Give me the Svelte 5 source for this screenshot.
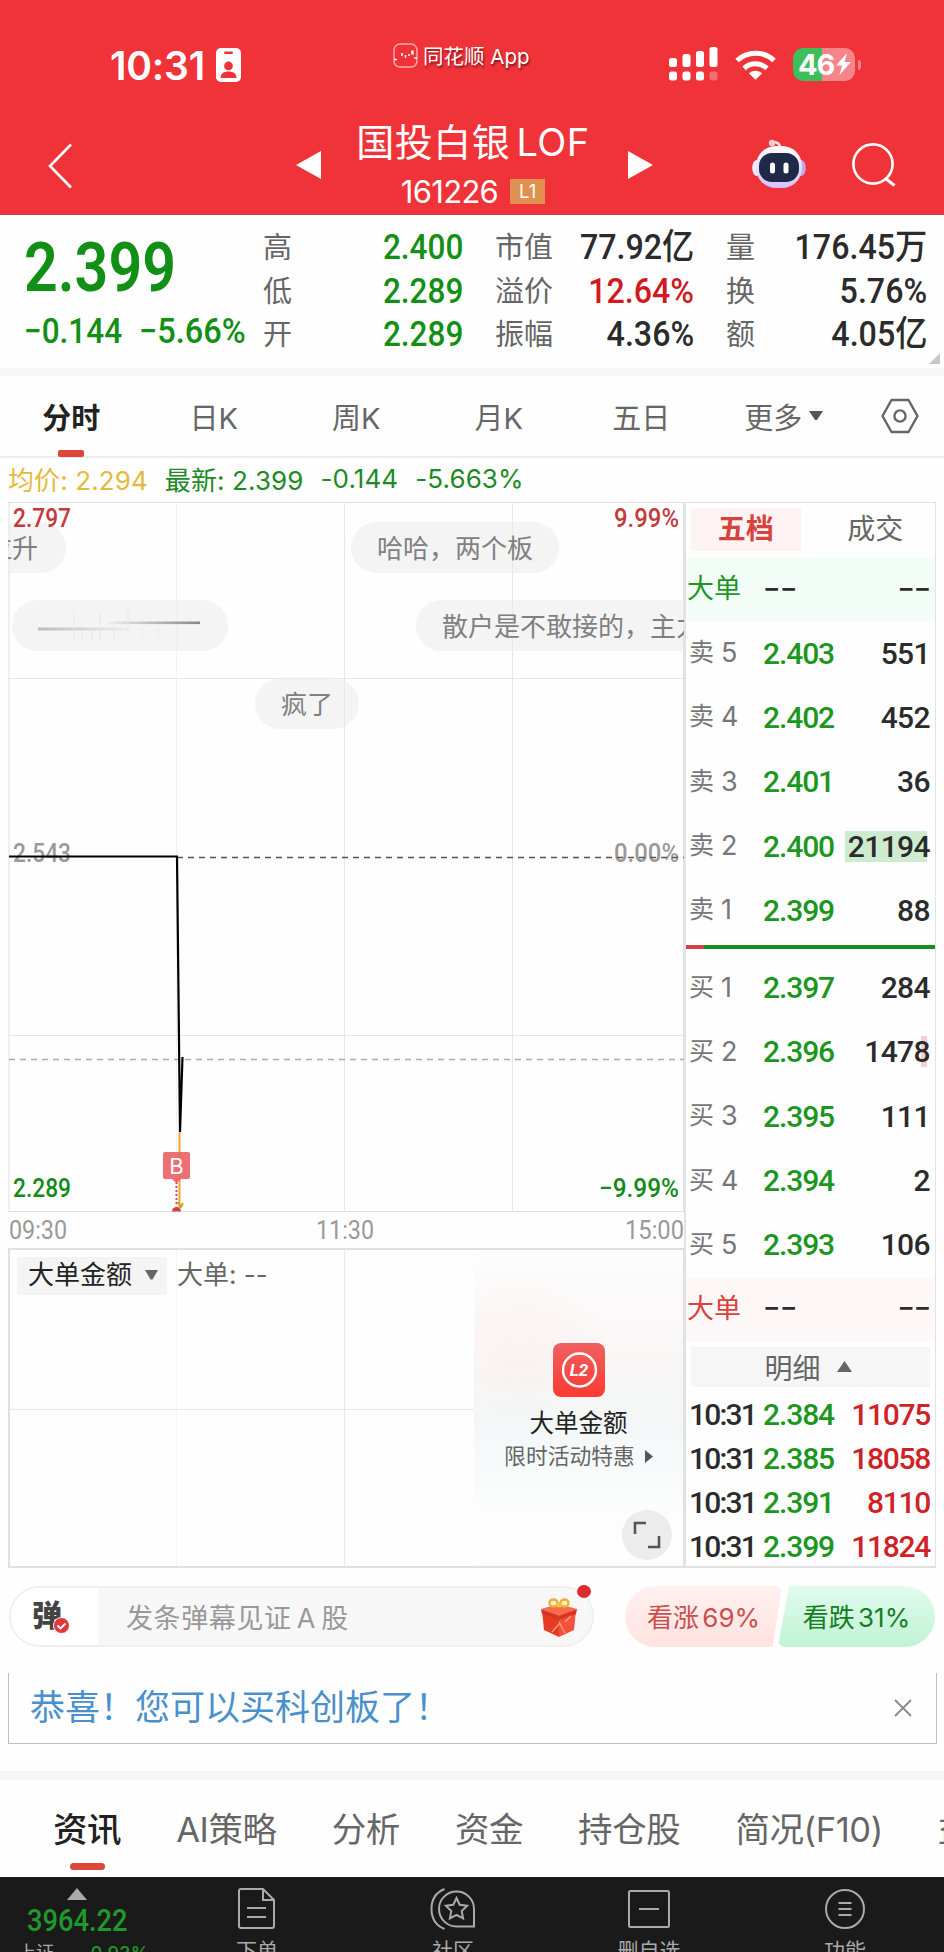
<script>
  const stats = [
    [['高', '2.400', 'down'], ['低', '2.289', 'down'], ['开', '2.289', 'down']],
    [['市值', '77.92亿', ''], ['溢价', '12.64%', 'up'], ['振幅', '4.36%', '']],
    [['量', '176.45万', ''], ['换', '5.76%', ''], ['额', '4.05亿', '']]
  ];

  const periods = ['分时', '日K', '周K', '月K', '五日', '更多'];
  let period = $state('分时');

  const sells = [
    { n: 5, price: '2.403', vol: '551' },
    { n: 4, price: '2.402', vol: '452' },
    { n: 3, price: '2.401', vol: '36' },
    { n: 2, price: '2.400', vol: '21194', mark: 'green', bar: 82 },
    { n: 1, price: '2.399', vol: '88' }
  ];
  const buys = [
    { n: 1, price: '2.397', vol: '284' },
    { n: 2, price: '2.396', vol: '1478', mark: 'pink', bar: 6 },
    { n: 3, price: '2.395', vol: '111' },
    { n: 4, price: '2.394', vol: '2' },
    { n: 5, price: '2.393', vol: '106' }
  ];
  const ticks = [
    ['10:31', '2.384', '11075'],
    ['10:31', '2.385', '18058'],
    ['10:31', '2.391', '8110'],
    ['10:31', '2.399', '11824']
  ];

  const sections = ['资讯', 'AI策略', '分析', '资金', '持仓股', '简况(F10)', '益'];
  let section = $state('资讯');

  let bannerOpen = $state(true);
</script>

{#snippet level(side, row)}
  <div class="level">
    <span class="side">{side}<i>{row.n}</i></span>
    <span class="price">{row.price}</span>
    <span class="vol">
      {#if row.mark}<span class="mark {row.mark}" style="width: {row.bar}px"></span>{/if}
      <b>{row.vol}</b>
    </span>
  </div>
{/snippet}

<div class="phone">
  <header>
    <div class="status">
      <div class="clock">
        <span>10:31</span>
        <svg width="25" height="34" viewBox="0 0 25 34">
          <rect width="25" height="34" rx="5" fill="#fff" />
          <rect x="8" y="3.5" width="9" height="2.4" rx="1.2" fill="#ef3239" />
          <circle cx="12.5" cy="18" r="4.4" fill="#ef3239" />
          <path d="M4.5 30c0-4.500 3.500-6.500 8-6.500s8 2 8 6.500z" fill="#ef3239" />
        </svg>
      </div>
      <div class="app-name">
        <svg width="25" height="25" viewBox="0 0 25 25" fill="none" stroke="#fff">
          <rect x="1" y="1" width="23" height="23" rx="6" stroke-opacity=".6" stroke-width="1.400" />
          <path d="M1 16.500h3M21 15h3M9 10v3M12.500 12v3M16 11v2" stroke-width="1.500" />
          <path d="M19.500 7.500v4" stroke-width="2.500" />
        </svg>
        <span>同花顺 App</span>
      </div>
      <div class="signals">
        <svg width="49" height="34" viewBox="0 0 49 34" fill="#fff">
          <rect x="0" y="11" width="8" height="9" rx="2.500" />
          <rect x="13.500" y="7" width="8" height="13" rx="2.500" />
          <rect x="27" y="4" width="8" height="16" rx="2.500" />
          <rect x="40.500" y="0" width="8" height="20" rx="2.500" />
          <rect x="0" y="24.500" width="8" height="9" rx="2.500" />
          <rect x="13.500" y="24.500" width="8" height="9" rx="2.500" />
          <rect x="27" y="24.500" width="8" height="9" rx="2.500" />
          <rect x="40.500" y="24.500" width="8" height="9" rx="2.500" opacity=".3" />
        </svg>
        <svg width="41" height="31" viewBox="0 0 41 31" fill="none" stroke="#fff" stroke-width="5">
          <path d="M2 11.500a27 27 0 0 1 37 0" />
          <path d="M9 19.300a17 17 0 0 1 23 0" />
          <path d="M13.800 24.300a9.800 9.800 0 0 1 13.400 0L20.500 30.800z" fill="#fff" stroke="none" />
        </svg>
        <div class="battery">
          <span>46</span>
          <svg width="15" height="22" viewBox="0 0 15 22"><path d="M11 0L0 12.500h6L3.500 22 15 9H8.500z" fill="#fff" /></svg>
        </div>
      </div>
    </div>

    <div class="nav">
      <svg class="back" width="26" height="46" viewBox="0 0 26 46" fill="none" stroke="#fff" stroke-width="2.600">
        <path d="M24 1.500L3 23l21 21.500" />
      </svg>
      <svg class="prev" width="25" height="28" viewBox="0 0 25 28"><path d="M25 0v28L0 14z" fill="#fff" /></svg>
      <div class="title">
        <h1>国投白银 LOF</h1>
        <div class="code"><span>161226</span><em>L1</em></div>
      </div>
      <svg class="next" width="25" height="28" viewBox="0 0 25 28"><path d="M0 0v28l25-14z" fill="#fff" /></svg>
      <svg class="robot" width="54" height="50" viewBox="0 0 54 50">
        <defs>
          <linearGradient id="shell" x1="0" y1="0" x2="0" y2="1">
            <stop offset="0" stop-color="#fff" />
            <stop offset="1" stop-color="#d3c2fb" />
          </linearGradient>
        </defs>
        <path d="M28 9c0-4-3-6-7-6" fill="none" stroke="#ffe3ea" stroke-width="2.500" />
        <circle cx="20" cy="4" r="3.200" fill="#ffc9d0" />
        <ellipse cx="5" cy="29" rx="4.800" ry="8" fill="#eef" />
        <ellipse cx="49" cy="29" rx="4.800" ry="8" fill="#b9a8f5" />
        <rect x="4" y="7" width="46" height="42" rx="20" fill="url(#shell)" />
        <rect x="7" y="14" width="40" height="29" rx="13" fill="#1f2a48" />
        <rect x="18" y="23.500" width="5" height="11" rx="2.500" fill="#fff" />
        <rect x="31.500" y="23.500" width="5" height="11" rx="2.500" fill="#fff" />
      </svg>
      <svg class="search" width="44" height="44" viewBox="0 0 44 44" fill="none" stroke="#fff" stroke-width="2.600">
        <circle cx="21" cy="21" r="19.600" />
        <path d="M33 35l9.500 7.500" stroke-width="3" />
      </svg>
    </div>
  </header>

  <section class="quote">
    <div class="last">
      <div class="now"><span>2.399</span></div>
      <div class="change"><span>−0.144</span><span>−5.66%</span></div>
    </div>
    {#each stats as column, i}
      <dl class="col{i}">
        {#each column as [label, value, tone]}
          <div><dt>{label}</dt><dd class={tone}><span>{value}</span></dd></div>
        {/each}
      </dl>
    {/each}
    <span class="corner"></span>
  </section>

  <nav class="periods">
    {#each periods as p}
      <button class:active={period === p} onclick={() => (period = p)}>
        {p}{#if p === '更多'}<svg width="14" height="10" viewBox="0 0 14 10"><path d="M0 0h14L8 9H6z" fill="#555" /></svg>{/if}
      </button>
    {/each}
    <svg class="gear" width="38" height="36" viewBox="0 0 38 36" fill="none" stroke="#666" stroke-width="2.400">
      <path d="M10.500 2h17L36.500 18l-9 16h-17L1.500 18z" stroke-linejoin="round" />
      <circle cx="19" cy="18" r="5.600" />
    </svg>
  </nav>

  <div class="averages">
    <span class="avg">均价: 2.294</span>
    <span>最新: 2.399</span>
    <span>-0.144</span>
    <span>-5.663%</span>
  </div>

  <main>
    <div class="charts">
      <div class="plot">
        <svg class="minute" width="676" height="746" viewBox="0 0 676 746">
          <g stroke="#e6e6e6">
            <path d="M0 .5H676M1 0V710M675.500 0V710M0 709.500H676" stroke="#e0e0e0" />
            <path d="M0 176.500H676M0 533.500H676M336.500 0V710M504.500 0V710" />
            <path d="M168.500 0V710" stroke="#f3f3f3" />
          </g>
          <g class="axis">
            <text x="5" y="360" textLength="58" lengthAdjust="spacingAndGlyphs" fill="#999">2.543</text>
            <text x="606" y="360" textLength="65" lengthAdjust="spacingAndGlyphs" fill="#999">0.00%</text>
            <text x="5" y="695" textLength="58" lengthAdjust="spacingAndGlyphs" fill="#128a18">2.289</text>
            <text x="591" y="695" textLength="80" lengthAdjust="spacingAndGlyphs" fill="#128a18">−9.99%</text>
          </g>
          <g class="axis time" fill="#999">
            <text x="1" y="737" textLength="58" lengthAdjust="spacingAndGlyphs">09:30</text>
            <text x="308" y="737" textLength="58" lengthAdjust="spacingAndGlyphs">11:30</text>
            <text x="617" y="737" textLength="59" lengthAdjust="spacingAndGlyphs">15:00</text>
          </g>
          <path d="M169 355.500H676" stroke="#555" stroke-width="1.300" stroke-dasharray="6 5" />
          <path d="M1 557.500H676" stroke="#b0b09a" stroke-width="1.500" stroke-dasharray="6 5" />
          <path d="M171.500 630V706" stroke="#f0a52f" stroke-width="2" />
          <path d="M168.500 676V704" stroke="#d5494c" stroke-width="2" stroke-dasharray="2 2" />
          <path d="M1 354.500H169L172 630 174.500 555" fill="none" stroke="#000" stroke-width="2.200" />
          <rect x="155" y="650" width="27" height="27" rx="2" fill="#ea6468" fill-opacity=".92" />
          <path d="M164 677h9l-4.500 4z" fill="#ea6468" />
          <text x="168.500" y="672" text-anchor="middle" class="buy">B</text>
          <path d="M164 709.500a4.500 4.500 0 0 1 9 0z" fill="#cf4144" />
          <path d="M170 700l3 5 2-4" fill="none" stroke="#d6a12b" stroke-width="2" />
        </svg>
        <span class="bubble cut">拉升</span>
        <span class="bubble b1">哈哈，两个板</span>
        <span class="bubble smear"><svg width="164" height="34" viewBox="0 0 164 34">
          <defs>
            <linearGradient id="fade-l"><stop offset="0" stop-color="#bbb" /><stop offset="1" stop-color="#eee" /></linearGradient>
            <linearGradient id="fade-r"><stop offset="0" stop-color="#eee" /><stop offset="1" stop-color="#888" /></linearGradient>
          </defs>
          <rect x="0" y="19.500" width="90" height="3" fill="url(#fade-l)" />
          <rect x="70" y="13.500" width="92" height="2.600" fill="url(#fade-r)" />
          <path d="M36 4v28M62 4v28M90 3v20M44 22v10M54 20v12M76 20v12M104 20v8M120 20v8" stroke="#e8e8e8" />
        </svg></span>
        <span class="bubble b2">散户是不敢接的，主力</span>
        <span class="bubble b3">疯了</span>
        <svg class="limits axis" width="676" height="30" viewBox="0 0 676 30" fill="#c4393c">
          <text x="5" y="25" textLength="58" lengthAdjust="spacingAndGlyphs">2.797</text>
          <text x="606" y="25" textLength="65" lengthAdjust="spacingAndGlyphs">9.99%</text>
        </svg>
      </div>

      <div class="big-orders">
        <svg class="grid" width="676" height="318" viewBox="0 0 676 318">
          <path d="M0 159.500H676M336.500 0V318" stroke="#e8e8e8" />
          <path d="M168.500 0V318" stroke="#f4f4f4" />
        </svg>
        <div class="indicator">
          <button>大单金额<svg width="13" height="10" viewBox="0 0 13 10"><path d="M0 0h13L7.500 9.500h-2z" fill="#666" /></svg></button>
          <span>大单: --</span>
        </div>
        <div class="promo">
          <svg width="52" height="54" viewBox="0 0 52 54">
            <defs>
              <linearGradient id="l2" x1="0" y1="0" x2="0" y2="1">
                <stop offset="0" stop-color="#f06060" />
                <stop offset="1" stop-color="#fb3a30" />
              </linearGradient>
            </defs>
            <rect width="52" height="54" rx="8" fill="url(#l2)" />
            <circle cx="26.500" cy="27" r="16.500" fill="none" stroke="#fff" stroke-width="2.400" />
            <text x="26" y="33" text-anchor="middle">L2</text>
          </svg>
          <strong>大单金额</strong>
          <p>限时活动特惠<svg width="8" height="13" viewBox="0 0 8 13"><path d="M0 0v13l8-6.500z" fill="#555" /></svg></p>
        </div>
        <button class="expand" aria-label="全屏">
          <svg width="28" height="28" viewBox="0 0 28 28" fill="none" stroke="#555" stroke-width="2.600">
            <path d="M13 2H2v11M26 15v11H15" />
          </svg>
        </button>
      </div>
    </div>

    <aside>
      <div class="book-tabs"><span class="on">五档</span><span>成交</span></div>
      <div class="level big sell"><span class="side">大单</span><span class="dash">−−</span><span class="vol dash">−−</span></div>
      {#each sells as row}{@render level('卖', row)}{/each}
      <div class="ratio"><i></i></div>
      {#each buys as row}{@render level('买', row)}{/each}
      <div class="level big buyer"><span class="side">大单</span><span class="dash">−−</span><span class="vol dash">−−</span></div>
      <div class="detail">明细<svg width="15" height="11" viewBox="0 0 15 11"><path d="M7.500 0L15 11H0z" fill="#666" /></svg></div>
      {#each ticks as [time, price, vol]}
        <div class="tick"><span class="time">{time}</span><span class="price">{price}</span><span class="vol"><b>{vol}</b></span></div>
      {/each}
    </aside>
  </main>

  <div class="danmu">
    <div class="input">
      <div class="toggle">弹<svg width="17" height="17" viewBox="0 0 17 17">
        <circle cx="8.500" cy="8.500" r="8" fill="#e0393a" stroke="#fff" />
        <path d="M4.500 8.500l3 3 5-5" fill="none" stroke="#fff" stroke-width="1.800" />
      </svg></div>
      <span class="hint">发条弹幕见证 A 股</span>
      <svg class="gift" width="36" height="40" viewBox="0 0 36 40">
        <path d="M1 13l17 5v22L3 33z" fill="#e63a25" />
        <path d="M35 13l-17 5v22l15-7z" fill="#f2523a" />
        <path d="M0 12l18-5 18 5-18 7z" fill="#fa6a4c" />
        <path d="M0 12l18 7v4L1 17zM36 12l-18 7v4l17-6z" fill="#d93421" />
        <path d="M18 25l6 11M18 27l-7 8M30 19l-6 6" stroke="#ff9a78" stroke-width="1.500" />
        <ellipse cx="12.500" cy="6" rx="4" ry="3.500" fill="#fff3c4" stroke="#eeae3a" stroke-width="2.400" />
        <ellipse cx="23.500" cy="6" rx="4" ry="3.500" fill="#fff3c4" stroke="#eeae3a" stroke-width="2.400" />
        <circle cx="18" cy="8" r="2.600" fill="#f5be4a" />
      </svg>
      <span class="dot"></span>
    </div>
    <div class="vote">
      <span class="rise">看涨 69%</span>
      <span class="fall">看跌 31%</span>
    </div>
  </div>

  <div class="banner">
    {#if bannerOpen}
      <span>恭喜！您可以买科创板了！</span>
      <button aria-label="关闭" onclick={() => (bannerOpen = false)}>
        <svg width="18" height="18" viewBox="0 0 18 18" stroke="#888" stroke-width="1.800"><path d="M1 1l16 16M17 1L1 17" /></svg>
      </button>
    {/if}
  </div>

  <nav class="sections">
    {#each sections as s}
      <button class:active={section === s} onclick={() => (section = s)}>{s}</button>
    {/each}
  </nav>

  <footer>
    <div class="index">
      <svg width="20" height="12" viewBox="0 0 20 12"><path d="M10 0l10 12H0z" fill="#aaa" /></svg>
      <strong><span>3964.22</span></strong>
      <div><span>上证</span><em>-0.93%</em></div>
    </div>
    <div class="tool">
      <svg width="42" height="44" viewBox="0 0 42 44" fill="none" stroke="#aaa" stroke-width="2">
        <path d="M3 4q0-2 2-2h22l11 11v26q0 2-2 2H5q-2 0-2-2zM27 2v11h11M11 21h19M11 30h19" />
      </svg>
      <span>下单</span>
    </div>
    <div class="tool">
      <svg width="46" height="44" viewBox="0 0 46 44" fill="none" stroke="#aaa" stroke-width="2">
        <path d="M14.500 2C6 5.500 1.500 13 1.500 22s4.500 16.500 13 20" />
        <path d="M26.500 4.500a17.500 17.500 0 0 0 0 35H44V22A17.500 17.500 0 0 0 26.500 4.500z" />
        <path d="M26.500 11l3.200 6.800 7.400 1-5.400 5.200 1.400 7.400-6.600-3.600-6.600 3.600 1.400-7.400-5.400-5.200 7.400-1z" />
      </svg>
      <span>社区</span>
    </div>
    <div class="tool">
      <svg width="44" height="44" viewBox="0 0 44 44" fill="none" stroke="#aaa" stroke-width="2">
        <rect x="2" y="4" width="40" height="36" rx="1.500" />
        <path d="M12 22h20" />
      </svg>
      <span>删自选</span>
    </div>
    <div class="tool">
      <svg width="44" height="44" viewBox="0 0 44 44" fill="none" stroke="#aaa" stroke-width="2">
        <circle cx="22" cy="22" r="19" />
        <path d="M15.500 16h13M15.500 22h13M15.500 28h13" />
      </svg>
      <span>功能</span>
    </div>
  </footer>
</div>

<style>
  :global(body) {
    margin: 0;
    background: #fff;
  }

  .phone {
    width: 944px;
    height: 1952px;
    overflow: hidden;
    display: flex;
    flex-direction: column;
    background: #fefefe;
    color: #2b2b2b;
    font-family: Inter, "Noto Sans CJK SC", sans-serif;
  }

  .phone > * {
    flex: none;
    box-sizing: border-box;
  }

  button {
    padding: 0;
    border: 0;
    background: none;
    color: inherit;
    font: inherit;
  }

  svg {
    display: block;
    flex: none;
  }

  em, i {
    font-style: normal;
  }

  /* header */
  header {
    height: 215px;
    background: #f03239;
    border-bottom: 1px solid #b8484e;
    color: #fff;
  }

  .status {
    height: 96px;
    padding: 40px 83px 0 110px;
    box-sizing: border-box;
    display: flex;
    align-items: flex-start;
  }

  .clock {
    display: flex;
    align-items: center;
    gap: 11px;
    width: 283px;
    height: 50px;
    font-size: 39px;
    font-weight: 600;
    letter-spacing: -0.2px;
  }

  .app-name {
    display: flex;
    align-items: center;
    gap: 5px;
    height: 30px;
    font-size: 20.5px;
    white-space: nowrap;
    text-shadow: 1px 2px 2px rgba(60, 0, 0, 0.6);
  }

  .signals {
    display: flex;
    align-items: center;
    margin-left: auto;
    gap: 17px;
    height: 48px;
  }

  .battery {
    position: relative;
    display: flex;
    align-items: center;
    gap: 2px;
    width: 62px;
    height: 33px;
    padding-left: 5px;
    margin-right: 6px;
    box-sizing: border-box;
    border-radius: 10px;
    background: linear-gradient(90deg, #3fbf5b 47%, #f5858a 47%);
    font-size: 29px;
    font-weight: 700;
    letter-spacing: -1px;
  }

  .battery::after {
    content: '';
    position: absolute;
    left: 65px;
    top: 12px;
    width: 3px;
    height: 10px;
    border-radius: 0 3px 3px 0;
    background: #f5858a;
  }

  .nav {
    display: flex;
    align-items: flex-start;
    height: 118px;
    padding: 0 48px 0 47px;
  }

  .back {
    margin-top: 47px;
  }

  .prev {
    margin: 55px 0 0 223px;
  }

  .title {
    width: 307px;
    padding: 18px 3px 0 0;
    box-sizing: border-box;
    text-align: center;
  }

  h1 {
    margin: 0;
    font-size: 38px;
    font-weight: 400;
    line-height: 56px;
    letter-spacing: 0.5px;
    word-spacing: -5px;
    white-space: nowrap;
  }

  .code {
    display: flex;
    justify-content: center;
    align-items: center;
    gap: 12px;
    height: 38px;
    margin-top: 2px;
  }

  .code span {
    font-size: 31px;
    letter-spacing: -0.7px;
  }

  .code em {
    width: 35px;
    height: 25px;
    background: #e09150;
    font-size: 18.500px;
    line-height: 25px;
  }

  .next {
    margin-top: 55px;
  }

  .robot {
    margin: 43px 0 0 99px;
  }

  .search {
    margin: 47px 0 0 46px;
  }

  /* quote summary */
  .quote {
    position: relative;
    display: flex;
    height: 161px;
    padding: 11px 17px 0 24px;
    border-bottom: 8px solid #f6f6f7;
  }

  .last {
    width: 239px;
    color: #128f15;
    font-family: Roboto, sans-serif;
    font-weight: 500;
  }

  .now span, .change span, dd span {
    display: inline-block;
    transform: scaleX(0.87);
    transform-origin: left;
    white-space: nowrap;
  }

  .now {
    height: 82px;
    font-size: 68px;
    line-height: 84px;
    font-weight: 600;
  }

  .change {
    display: flex;
    font-size: 35px;
    line-height: 48px;
  }

  .change span {
    width: 115px;
    transform: scaleX(0.9);
  }

  .change span + span {
    transform: scaleX(0.93);
  }

  dl {
    margin: 0;
  }

  dl > div {
    display: flex;
    justify-content: space-between;
    height: 43.500px;
    line-height: 44.500px;
  }

  dt {
    color: #666;
    font-size: 29px;
  }

  dd {
    margin: 0;
    font-family: Roboto, "Noto Sans CJK SC", sans-serif;
    font-size: 35px;
    font-weight: 500;
  }

  dd span {
    transform: scaleX(0.92);
    transform-origin: right;
  }

  .col0 dd span {
    transform: scaleX(0.9);
  }

  dd.down {
    color: #128f15;
  }

  dd.up {
    color: #d01a1e;
  }

  .col0 {
    width: 200px;
  }

  .col1 {
    width: 199px;
    margin-left: 32px;
  }

  .col2 {
    width: 201px;
    margin-left: 32px;
  }

  .corner {
    position: absolute;
    right: 4px;
    bottom: 4px;
    border-left: 11px solid transparent;
    border-bottom: 11px solid #c8c8c8;
  }

  /* period tabs */
  .periods {
    display: flex;
    align-items: center;
    height: 82px;
    border-bottom: 2px solid #ededed;
    font-size: 29px;
    color: #666;
  }

  .periods button {
    position: relative;
    display: flex;
    align-items: center;
    justify-content: center;
    gap: 7px;
    width: 142.500px;
    height: 80px;
  }

  .periods .active, .sections .active {
    color: #222;
    font-weight: 600;
  }

  .periods .active::after {
    content: '';
    position: absolute;
    left: 58px;
    bottom: -1px;
    width: 26px;
    height: 7px;
    border-radius: 2px;
    background: #e0453a;
  }

  .gear {
    margin-left: 26px;
  }

  .averages {
    display: flex;
    align-items: center;
    gap: 17px;
    height: 44px;
    padding: 0 0 3px 8px;
    color: #1d8a24;
    font-size: 26px;
    letter-spacing: 0.1px;
    white-space: nowrap;
  }

  .avg {
    color: #e5b93f;
  }

  /* charts and order book */
  main {
    display: flex;
    height: 1066px;
    padding-left: 8px;
  }

  .charts {
    width: 676px;
  }

  .plot {
    position: relative;
    width: 676px;
    height: 746px;
    overflow: hidden;
  }

  .limits {
    position: absolute;
    left: 0;
    top: 0;
  }

  .axis text {
    font-family: Roboto, sans-serif;
    font-size: 26px;
    font-weight: 500;
  }

  .time text {
    font-weight: 400;
  }

  .buy {
    fill: #fff;
    font-size: 22px;
  }

  .bubble {
    position: absolute;
    height: 51px;
    padding: 0 26px;
    border-radius: 26px;
    background: rgba(235, 235, 235, 0.55);
    color: #808080;
    font-size: 26px;
    line-height: 53px;
    white-space: nowrap;
  }

  .cut {
    left: -54px;
    top: 20px;
    padding: 0 28px 0 32px;
  }

  .b1 {
    left: 343px;
    top: 20px;
  }

  .smear {
    left: 4px;
    top: 98px;
  }

  .smear svg {
    margin-top: 8px;
  }

  .b2 {
    left: 408px;
    top: 98px;
  }

  .b3 {
    left: 247px;
    top: 176px;
  }

  .big-orders {
    position: relative;
    height: 320px;
    box-sizing: border-box;
    border: 1px solid #e0e0e0;
    border-width: 2px 1px 2px 2px;
    display: flex;
    justify-content: space-between;
    overflow: hidden;
  }

  .grid {
    position: absolute;
    left: -2px;
    top: 0;
  }

  .indicator {
    position: relative;
    display: flex;
    align-items: center;
    gap: 10px;
    height: 38px;
    margin: 7px 0 0 7px;
    color: #666;
    font-size: 26px;
    line-height: 36px;
  }

  .indicator > span {
    height: 38px;
  }

  .indicator button {
    display: flex;
    align-items: center;
    gap: 13px;
    height: 38px;
    padding: 0 9px 2px 11px;
    border-radius: 4px;
    background: #f4f4f4;
    color: #222;
  }

  .promo {
    position: relative;
    display: flex;
    flex-direction: column;
    align-items: center;
    width: 209px;
    padding-top: 93px;
    box-sizing: border-box;
    background:
      radial-gradient(circle at 22% 30%, rgba(255, 232, 232, 0.35), transparent 30%),
      linear-gradient(#fdfdfd 0%, #f9f6f6 35%, #f4f6f6 52%, #f5f9f9 62%, #fdfdfd 85%);
  }

  .promo text {
    fill: #fff;
    font-family: Roboto, sans-serif;
    font-size: 17px;
    font-style: italic;
    font-weight: 700;
  }

  .promo strong {
    margin-top: 8px;
    font-size: 24.500px;
    font-weight: 400;
    line-height: 36px;
    color: #222;
  }

  .promo p {
    display: flex;
    align-items: center;
    gap: 10px;
    margin: 0;
    color: #666;
    font-size: 21.800px;
    line-height: 30px;
  }

  .expand {
    position: absolute;
    right: 11px;
    bottom: 6px;
    display: flex;
    align-items: center;
    justify-content: center;
    width: 50px;
    height: 50px;
    border-radius: 50%;
    background: #ececec;
  }

  aside {
    width: 252px;
    box-sizing: border-box;
    border: 1px solid #e2e2e2;
    border-left: 2px solid #e2e2e2;
    border-bottom-width: 2px;
  }

  .book-tabs {
    display: flex;
    gap: 20px;
    height: 54px;
    padding: 5px 5px 6px;
    box-sizing: border-box;
    color: #666;
    font-size: 28px;
    line-height: 43px;
    text-align: center;
  }

  .book-tabs span {
    width: 112px;
  }

  .book-tabs .on {
    background: #fef3f3;
    color: #d8413c;
    font-weight: 700;
  }

  .level, .tick {
    display: flex;
    align-items: center;
    height: 64.300px;
    padding: 0 5px 0 3px;
    font-family: Roboto, "Noto Sans CJK SC", sans-serif;
    font-size: 30px;
    font-weight: 500;
  }

  .side {
    display: flex;
    align-items: center;
    gap: 7px;
    width: 74px;
    color: #777;
    font-size: 25px;
    font-weight: 400;
    line-height: 36px;
  }

  .side i {
    font-family: Inter, sans-serif;
    font-size: 27px;
  }

  .price {
    color: #1c961f;
    letter-spacing: -1.100px;
  }

  .vol {
    position: relative;
    flex: 1;
    text-align: right;
    letter-spacing: -0.6px;
  }

  .vol b {
    position: relative;
    font-weight: 500;
  }

  .mark {
    position: absolute;
    right: 3px;
    top: 2px;
    height: 31px;
  }

  .green {
    background: #cdeccf;
  }

  .pink {
    background: #f7cfd0;
  }

  .level.big {
    height: 64px;
  }

  .big .side {
    margin-left: -2px;
    width: 76px;
    font-size: 27px;
  }

  .sell {
    background: #f3fdf7;
  }

  .buyer {
    background: #fef7f7;
  }

  .sell .side {
    color: #1c961f;
  }

  .buyer .side {
    color: #d8413c;
  }

  .ratio {
    height: 4px;
    margin: 3px 0 6px;
    background: #14901c;
  }

  .ratio i {
    display: block;
    width: 18px;
    height: 4px;
    background: #d14343;
  }

  .detail {
    display: flex;
    align-items: center;
    justify-content: center;
    gap: 16px;
    height: 40px;
    margin: 6px 5px;
    padding-right: 5px;
    box-sizing: border-box;
    background: #f6f6f6;
    color: #666;
    font-size: 28px;
  }

  .tick {
    height: 44px;
  }

  .tick .time {
    width: 74px;
    letter-spacing: -1.800px;
    white-space: nowrap;
  }

  .tick .vol {
    color: #cf2226;
    letter-spacing: -1.300px;
  }

  /* comment bar */
  .danmu {
    display: flex;
    justify-content: space-between;
    height: 105px;
    padding: 18px 9px 0;
  }

  .input {
    position: relative;
    display: flex;
    align-items: center;
    width: 585px;
    height: 61px;
    box-sizing: border-box;
    border: 2px solid #f0f0f0;
    border-radius: 31px;
    background: #f7f7f7;
    color: #999;
    font-size: 27px;
  }

  .toggle {
    position: relative;
    width: 87px;
    height: 57px;
    padding-left: 21px;
    box-sizing: border-box;
    border-radius: 29px 0 0 29px;
    background: #fff;
    color: #444;
    font-size: 30px;
    font-weight: 900;
    line-height: 54px;
  }

  .toggle svg {
    position: absolute;
    left: 42px;
    top: 29px;
  }

  .hint {
    margin-left: 28px;
    word-spacing: -3px;
    letter-spacing: 0.6px;
  }

  .gift {
    position: absolute;
    left: 530px;
    top: 9px;
  }

  .dot {
    position: absolute;
    right: 1px;
    top: -3px;
    width: 14px;
    height: 13px;
    border-radius: 50%;
    background: #dd2c2e;
  }

  .vote {
    display: flex;
    width: 310px;
    height: 61px;
    font-size: 26px;
    line-height: 63px;
    text-align: center;
    word-spacing: -4px;
    white-space: nowrap;
  }

  .vote span {
    width: 157px;
  }

  .rise {
    border-radius: 31px 8px 8px 31px;
    background: linear-gradient(#fff0ef, #ffe3e0);
    clip-path: polygon(0 0, 100% 0, 94% 100%, 0 100%);
    color: #c9504c;
  }

  .fall {
    margin-left: -4px;
    border-radius: 8px 31px 31px 8px;
    background: linear-gradient(#e2fbee, #bff3d5);
    clip-path: polygon(7% 0, 100% 0, 100% 100%, 0 100%);
    color: #14801d;
  }

  .banner {
    display: flex;
    align-items: center;
    justify-content: space-between;
    height: 71px;
    margin: 0 7px 27px 8px;
    padding: 0 24px 0 21px;
    border: solid #bdbdbd;
    border-width: 0 1px 1px;
    color: #4a90cc;
    font-size: 35px;
    line-height: 68px;
    white-space: nowrap;
  }

  .banner span {
    height: 71px;
  }

  .sections {
    display: flex;
    gap: 55px;
    height: 106px;
    padding-left: 53px;
    border-top: 9px solid #f6f6f6;
    color: #666;
    font-size: 34.500px;
    white-space: nowrap;
  }

  .sections button {
    position: relative;
    flex: none;
    height: 98px;
    padding-bottom: 5px;
    letter-spacing: -0.4px;
  }

  .sections .active {
    font-weight: 500;
  }

  .sections .active::after {
    content: '';
    position: absolute;
    left: 17px;
    bottom: 8px;
    width: 35px;
    height: 7px;
    border-radius: 4px;
    background: #e0453a;
  }

  /* bottom bar */
  footer {
    display: flex;
    height: 75px;
    background: #1a1a1a;
    color: #aaa;
    overflow: hidden;
  }

  .index {
    width: 159px;
    padding-top: 11px;
    box-sizing: border-box;
  }

  .index > svg {
    margin-left: 67px;
  }

  .index strong {
    display: block;
    height: 40px;
    padding-left: 27px;
    color: #1f9a2a;
    font-family: Roboto, sans-serif;
    font-size: 31px;
    font-weight: 500;
    line-height: 42px;
  }

  .index strong span {
    display: inline-block;
    transform: scaleX(0.88);
    transform-origin: left;
  }

  .index div {
    display: flex;
    gap: 28px;
    padding-left: 18px;
    font-size: 18px;
    line-height: 26px;
  }

  .index em {
    color: #1f9a2a;
    font-size: 18.500px;
    font-weight: 500;
  }

  .tool {
    display: flex;
    flex-direction: column;
    align-items: center;
    width: 196px;
    padding-top: 10px;
    font-size: 21px;
  }

  .tool span {
    margin-top: 5px;
    line-height: 30px;
  }
</style>
